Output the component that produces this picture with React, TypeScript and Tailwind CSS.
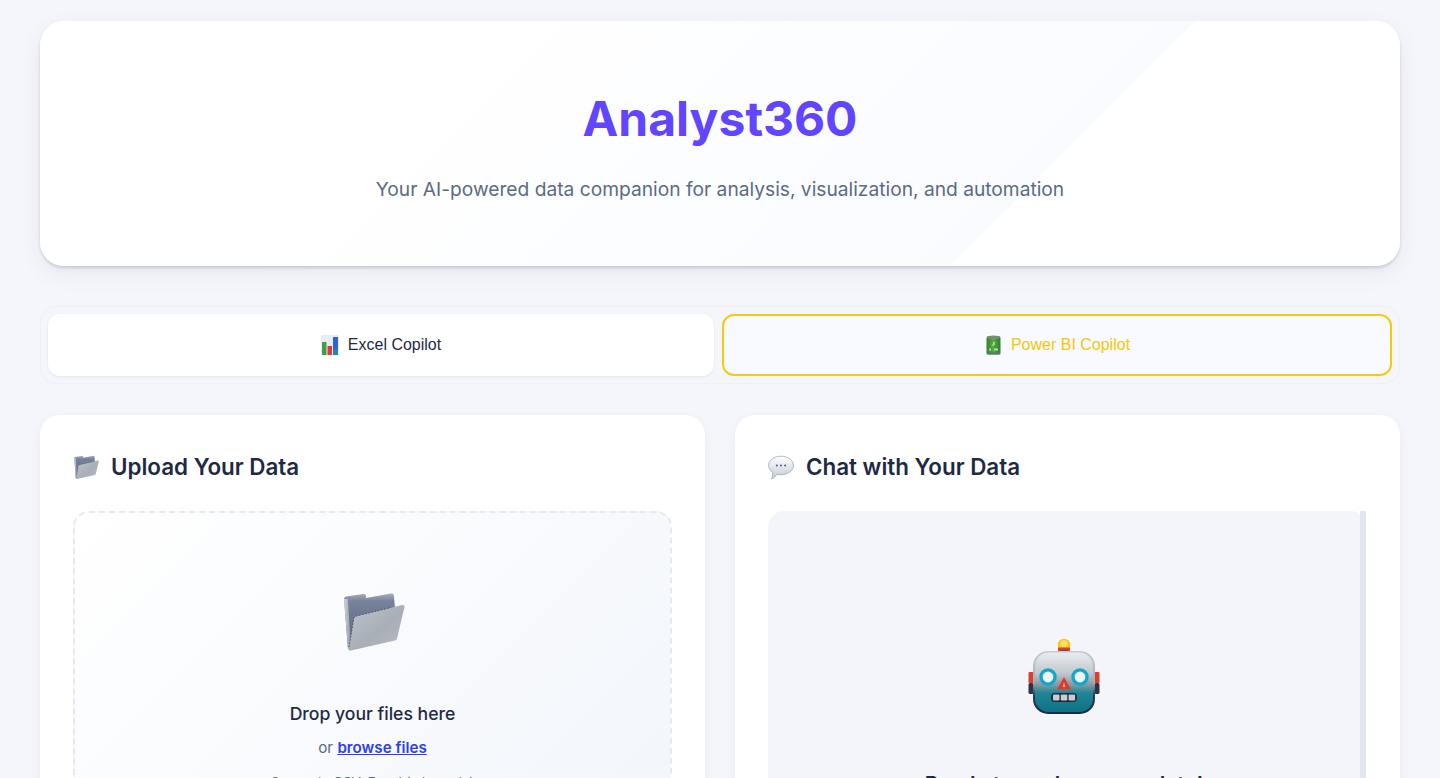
import React from "react";

function ChartIcon() {
  return (
    <svg width="18" height="20" viewBox="0 0 18 20" className="block">
      <rect x="0" y="0" width="18" height="20" rx="1" fill="#e8edf3" />
      <rect x="1" y="7" width="4.5" height="13" fill="#3f9e46" />
      <rect x="6.5" y="11" width="4.5" height="9" fill="#e23a2e" />
      <rect x="12" y="2" width="5" height="18" fill="#2f63d8" />
      <rect x="12" y="14" width="5" height="6" fill="#1f87a8" />
    </svg>
  );
}

function DrumIcon() {
  return (
    <svg width="15" height="20" viewBox="0 0 15 20" className="block">
      <defs>
        <linearGradient id="drum" x1="0" x2="1" y1="0" y2="0">
          <stop offset="0" stopColor="#3a7f30" />
          <stop offset="0.5" stopColor="#4fb03a" />
          <stop offset="1" stopColor="#357a2d" />
        </linearGradient>
      </defs>
      <rect x="0.5" y="1" width="14" height="18.5" rx="2.5" fill="url(#drum)" />
      <ellipse cx="7.5" cy="2.2" rx="6.5" ry="1.8" fill="#7d8a80" />
      <path d="M7 7 L9 7 L8.5 10 L5 11.5 L7 9 Z" fill="#b9d3b4" />
      <path d="M3 13.5 h2 v2 h-2 Z M8 13.5 h4 v2 h-4 Z" fill="#b9d3b4" />
      <rect x="0.5" y="17.6" width="14" height="2" rx="1" fill="#66756a" />
    </svg>
  );
}

function FolderIcon({ size, id }: { size: number; id: string }) {
  return (
    <svg width={size} height={size} viewBox="0 0 64 64" className="block">
      <defs>
        <linearGradient id={id + "b"} x1="0" x2="0" y1="0" y2="1">
          <stop offset="0" stopColor="#a9aeb8" />
          <stop offset="0.14" stopColor="#76819a" />
          <stop offset="1" stopColor="#5a6880" />
        </linearGradient>
        <linearGradient id={id + "f"} x1="0" x2="1" y1="0" y2="1">
          <stop offset="0" stopColor="#bfc4ca" />
          <stop offset="0.55" stopColor="#a8afb7" />
          <stop offset="1" stopColor="#b4bac1" />
        </linearGradient>
        <linearGradient id={id + "s"} x1="0" x2="1" y1="0" y2="0">
          <stop offset="0" stopColor="#d5d8dd" />
          <stop offset="1" stopColor="#8b93a3" />
        </linearGradient>
      </defs>
      <path d="M3 10 Q3 8 5 7.5 L22 5 Q25 4.8 25 7 L25 9 L50 4.5 Q53 4.3 53 7 L54 20 L9 60 L7 60 Z" fill={"url(#" + id + "b)"} />
      <path d="M3 10 L7 60 L10 60 L7 10 Z" fill={"url(#" + id + "s)"} />
      <path d="M7.5 60.5 L12.8 29.5 Q13.2 27.5 15.5 27 L61 16 Q64 15.6 63.5 18 L56 49.5 Q55.5 51 54 51.4 L10 61.5 Q7.4 62 7.5 60.5 Z" fill={"url(#" + id + "f)"} />
      <path d="M8 58 L12.8 29.5 Q13.2 27.5 15.5 27 L50 18.5" fill="none" stroke="#3f4c63" strokeWidth="0.9" strokeDasharray="1.6 1.6" />
    </svg>
  );
}

function BubbleIcon() {
  return (
    <svg width="26" height="25" viewBox="0 0 27 25" className="block">
      <defs>
        <linearGradient id="bub" x1="0" x2="0" y1="0" y2="1">
          <stop offset="0" stopColor="#ffffff" />
          <stop offset="1" stopColor="#c3cad6" />
        </linearGradient>
      </defs>
      <path d="M13.5 0.8 C20.6 0.8 26.4 4.9 26.4 10.4 C26.4 15.9 20.6 20 13.5 20 C12 20 10.7 19.8 9.4 19.5 C8 21.6 6 23.6 3.6 24.4 C4.6 22.4 5 20 4.9 17.6 C2.2 15.8 0.6 13.3 0.6 10.4 C0.6 4.9 6.4 0.8 13.5 0.8 Z" fill="url(#bub)" stroke="#9aa5b6" strokeWidth="0.8" />
      <circle cx="9.2" cy="10.4" r="1.1" fill="#59616e" />
      <circle cx="13.5" cy="10.4" r="1.1" fill="#59616e" />
      <circle cx="17.8" cy="10.4" r="1.1" fill="#59616e" />
    </svg>
  );
}

function RobotIcon() {
  return (
    <svg width="74" height="78" viewBox="0 0 74 78" className="block">
      <defs>
        <linearGradient id="ro" x1="0" x2="0" y1="0" y2="1">
          <stop offset="0" stopColor="#c6cbd2" />
          <stop offset="0.5" stopColor="#a4abb5" />
          <stop offset="0.7" stopColor="#2a3a52" />
          <stop offset="1" stopColor="#1c2940" />
        </linearGradient>
        <linearGradient id="rb" x1="0" x2="0" y1="0" y2="1">
          <stop offset="0" stopColor="#e9ecef" />
          <stop offset="0.35" stopColor="#c2c7cd" />
          <stop offset="0.52" stopColor="#8f9da7" />
          <stop offset="0.68" stopColor="#1f8597" />
          <stop offset="1" stopColor="#0e7284" />
        </linearGradient>
      </defs>
      <circle cx="37" cy="7" r="6.3" fill="#f6c519" />
      <circle cx="37" cy="5.6" r="3.6" fill="#fbdf5f" />
      <path d="M31 9.5 h12 v3.5 h-12 Z" fill="#d8402c" />
      <path d="M28 15.5 Q37 8 46 15.5 Z" fill="#4b5563" />
      <rect x="1.5" y="34" width="5" height="11" rx="1" fill="#dc3f2c" />
      <rect x="1.5" y="45" width="5" height="11" rx="1.5" fill="#2a3446" />
      <rect x="67.5" y="34" width="5" height="11" rx="1" fill="#dc3f2c" />
      <rect x="67.5" y="45" width="5" height="11" rx="1.5" fill="#2a3446" />
      <rect x="6" y="13" width="62" height="63" rx="15" fill="url(#ro)" />
      <rect x="8" y="14.5" width="58" height="59.5" rx="13.5" fill="url(#rb)" />
      <circle cx="21" cy="39" r="8.7" fill="#0fa9c4" />
      <circle cx="21" cy="39" r="5.4" fill="#eef3f6" />
      <circle cx="53" cy="39" r="8.7" fill="#0fa9c4" />
      <circle cx="53" cy="39" r="5.4" fill="#eef3f6" />
      <path d="M37 39 L44 51.5 L30 51.5 Z" fill="#df3b2a" />
      <path d="M37 44 l1.4 5 h-2.8 Z" fill="#f3b0a0" />
      <rect x="24" y="55" width="26" height="9" rx="4" fill="#20293a" />
      <rect x="26" y="56.5" width="6.5" height="6" rx="1" fill="#c6cdd3" />
      <rect x="33.8" y="56.5" width="6.5" height="6" rx="1" fill="#c6cdd3" />
      <rect x="41.6" y="56.5" width="6.5" height="6" rx="1" fill="#c6cdd3" />
    </svg>
  );
}

export default function App() {
  return (
    <div className="h-[778px] overflow-hidden bg-[#f4f6fb] px-10 pt-[21px] font-['Inter',sans-serif]">
      <header className="flex h-[245px] flex-col items-center rounded-3xl bg-[linear-gradient(135deg,#ffffff_28%,#f9fbff_72%,#ffffff_72%)] pt-[68px] shadow-[0_2px_3px_rgba(15,23,42,0.16),0_8px_24px_rgba(15,23,42,0.06)]">
        <h1 className="text-5xl leading-[60px] font-bold text-[#6246ff]">Analyst360</h1>
        <p className="mt-[26px] text-[19.2px] leading-7 text-[#5b6b83]">
          Your AI-powered data companion for analysis, visualization, and automation
        </p>
      </header>

      <nav className="mt-10 grid grid-cols-[666px_670px] gap-2 rounded-2xl border border-[#edf0f5] bg-[#f4f6fb] p-[7px] font-['Liberation_Sans',sans-serif] text-base">
        <button className="flex h-[62px] items-center justify-center gap-[9px] rounded-xl bg-white text-[#1e2a44] shadow-[0_1px_3px_rgba(15,23,42,0.08)]">
          <ChartIcon />
          Excel Copilot
        </button>
        <button className="flex h-[62px] items-center justify-center gap-[10px] rounded-xl border-2 border-[#f6cb0a] bg-[#f8faff] pl-[2px] text-[#f6c706]">
          <DrumIcon />
          Power BI Copilot
        </button>
      </nav>

      <main className="mt-[31px] grid grid-cols-2 gap-[30px]">
        <section className="h-[500px] rounded-[20px] bg-white px-[33px] pt-8 shadow-[0_4px_12px_rgba(15,23,42,0.05)]">
          <h2 className="flex h-10 items-center gap-3 text-[22.4px] font-semibold text-[#1e2a44]">
            <FolderIcon size={26} id="a" />
            Upload Your Data
          </h2>
          <div className="mt-6 flex h-[400px] flex-col items-center rounded-2xl border-2 border-dashed border-[#e6e9f2] bg-[linear-gradient(135deg,#ffffff,#f1f5fb)] pt-[76px]">
            <FolderIcon size={64} id="b" />
            <p className="mt-[47px] text-[17.6px] leading-7 font-medium text-[#1e2a44]">Drop your files here</p>
            <p className="mt-[8px] text-[15.2px] leading-6 text-[#5b6b83]">
              or <a className="font-semibold text-[#2b3ef0] underline">browse files</a>
            </p>
            <p className="mt-[12px] text-[13.6px] leading-5 text-[#5b6b83]">Supports CSV, Excel (.xlsx, .xls)</p>
          </div>
        </section>

        <section className="h-[500px] rounded-[20px] bg-white pr-[34px] pl-[33px] pt-8 shadow-[0_4px_12px_rgba(15,23,42,0.05)]">
          <h2 className="flex h-10 items-center gap-3 text-[22.4px] font-semibold text-[#1e2a44]">
            <BubbleIcon />
            Chat with Your Data
          </h2>
          <div className="mt-6 flex h-[400px] rounded-2xl bg-[#f3f5fb]">
            <div className="flex flex-1 flex-col items-center pt-[127px]">
              <RobotIcon />
              <p className="mt-[55px] text-[20.8px] leading-7 font-semibold text-[#1e2a44]">Ready to analyze your data!</p>
            </div>
            <div className="w-[6px] bg-[#e2e6f0]" />
          </div>
        </section>
      </main>
    </div>
  );
}
